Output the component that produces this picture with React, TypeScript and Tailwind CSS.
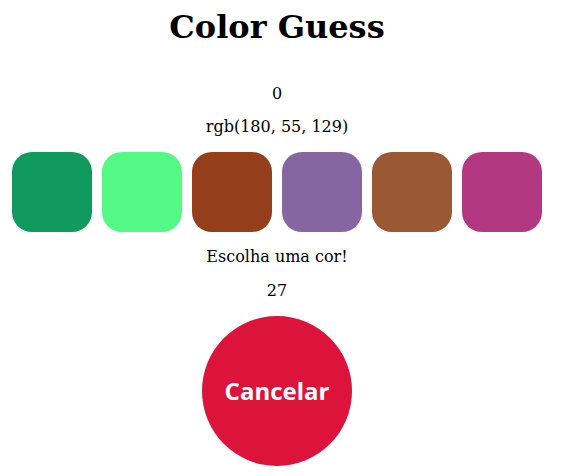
import React from "react";

const colors = [
  "#119a5e",
  "#53f984",
  "#953e1b",
  "#8765a0",
  "#9b5834",
  "#b43781",
];

export default function App() {
  return (
    <div className="w-[554px] flex flex-col items-center bg-white text-black font-['DejaVu_Serif',serif]">
      <h1 className="mt-[9px] text-[32px] leading-[37px] font-bold">Color Guess</h1>
      <p className="mt-[38px] text-[16px] leading-[19px]">0</p>
      <p className="mt-[14px] text-[16px] leading-[19px]">rgb(180, 55, 129)</p>
      <div className="mt-[16px] flex gap-[10px]">
        {colors.map((c) => (
          <button
            key={c}
            className="w-[80px] h-[80px] rounded-[20px]"
            style={{ backgroundColor: c }}
          />
        ))}
      </div>
      <p className="mt-[15px] text-[16px] leading-[19px]">Escolha uma cor!</p>
      <p className="mt-[15px] text-[16px] leading-[19px]">27</p>
      <button className="mt-[16px] w-[150px] h-[150px] rounded-full bg-[#dc143c] text-white font-['Open_Sans',sans-serif] font-bold text-[24px]">
        Cancelar
      </button>
    </div>
  );
}
